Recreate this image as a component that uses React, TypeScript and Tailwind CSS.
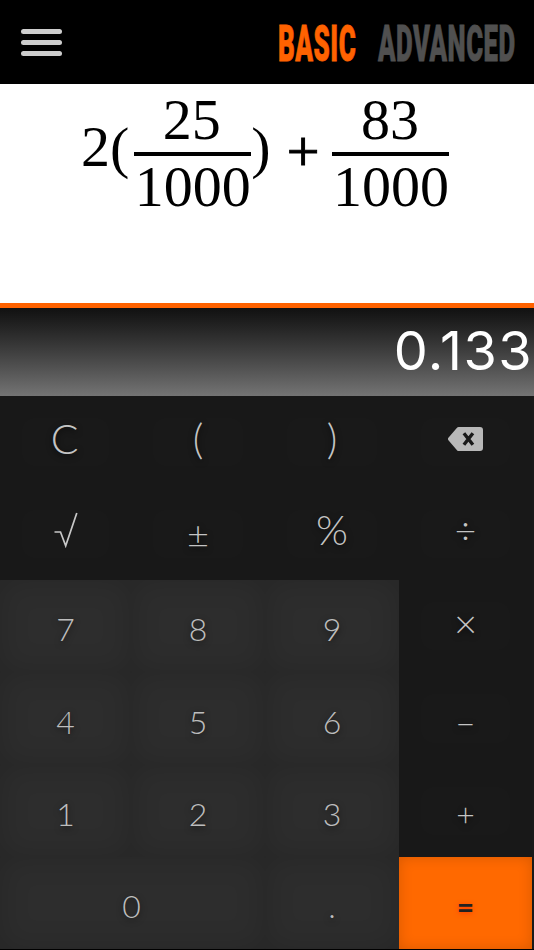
import clsx from "clsx";

type Key = {
  label: string;
  text?: string;
  kind?: "digit" | "equals";
  wide?: boolean;
};

const keys: Key[] = [
  { label: "C", text: "text-[41px] pb-[7px] pr-0.5" },
  { label: "(", text: "text-[41px] pb-[7px]" },
  { label: ")", text: "text-[41px] pb-[7px]" },
  { label: "back" },
  { label: "sqrt" },
  { label: "±", text: "text-[38px] pb-0.5" },
  { label: "%", text: "text-[41px] pb-[9px]" },
  { label: "÷", text: "text-[37px] pb-[9px]" },
  { label: "7", kind: "digit" },
  { label: "8", kind: "digit" },
  { label: "9", kind: "digit" },
  { label: "×", text: "text-[40px] pb-[6px]" },
  { label: "4", kind: "digit" },
  { label: "5", kind: "digit" },
  { label: "6", kind: "digit" },
  { label: "–", text: "text-[36px] pt-[4px]" },
  { label: "1", kind: "digit" },
  { label: "2", kind: "digit" },
  { label: "3", kind: "digit" },
  { label: "+", text: "text-[32px] pt-[7px]" },
  { label: "0", kind: "digit", wide: true },
  { label: ".", kind: "digit" },
  { label: "=", kind: "equals" },
];

function BackspaceIcon() {
  return (
    <svg width="35" height="24" viewBox="0 0 35 24" className="mb-[6px]">
      <path
        d="M10.6 0H32a3 3 0 0 1 3 3v18a3 3 0 0 1-3 3H10.6a2 2 0 0 1-1.4-.6L.4 13.2a1.8 1.8 0 0 1 0-2.4L9.2.6A2 2 0 0 1 10.6 0Z"
        fill="#b8b8b8"
      />
      <path d="M15.9 6.2 24.9 17.8M24.9 6.2 15.9 17.8" stroke="#191919" strokeWidth="3.4" />
    </svg>
  );
}

function RootIcon() {
  return (
    <svg width="24" height="36" viewBox="0 0 24 36" fill="none" stroke="#c8c8c8" className="mb-[8px]">
      <path d="M0.5 20H6.5L11.7 33.8L22.8 1" strokeWidth="1.7" />
    </svg>
  );
}

function KeyButton({ label, text, kind, wide }: Key) {
  return (
    <button
      className={clsx(
        "flex items-center justify-center leading-none",
        wide && "col-span-2 pr-0.5",
        !kind &&
          "bg-[#191919] font-light text-[#c4c4c4] shadow-[inset_0_0_30px_rgba(0,0,0,0.06)] [text-shadow:0_2px_6px_rgba(0,0,0,0.7)]",
        kind === "digit" &&
          "bg-[#2d2d2d] pt-[6px] text-[32px] font-light text-[#bdbdbd] shadow-[inset_0_0_30px_rgba(0,0,0,0.16)] [text-shadow:0_2px_6px_rgba(0,0,0,0.6)]",
        kind === "equals" &&
          "bg-[#ff6900] pt-1.5 text-[30px] font-bold text-[#222] shadow-[inset_0_0_14px_rgba(0,0,0,0.16)] [text-shadow:0_1px_5px_rgba(255,50,0,0.9)]",
        text
      )}
    >
      {label === "back" ? <BackspaceIcon /> : label === "sqrt" ? <RootIcon /> : label}
    </button>
  );
}

function Fraction({ top, bottom }: { top: string; bottom: string }) {
  return (
    <div className="flex w-[117px] flex-col text-center">
      <span className="h-[62px] pr-0.5">{top}</span>
      <span className="mt-px h-1 bg-black" />
      <span className="h-[62px]">{bottom}</span>
    </div>
  );
}

export default function App() {
  return (
    <div className="flex h-[950px] w-[534px] flex-col overflow-hidden bg-black font-['Lato',sans-serif]">
      <header className="flex h-[84px] items-center justify-between pr-[19px] pl-[21px]">
        <div className="flex flex-col gap-[6px] pt-px">
          <span className="h-[5px] w-[41px] rounded-full bg-[#cdcdcd]" />
          <span className="h-[5px] w-[41px] rounded-full bg-[#cdcdcd]" />
          <span className="h-[5px] w-[41px] rounded-full bg-[#cdcdcd]" />
        </div>
        <nav className="flex pt-[3px] font-['Roboto',sans-serif] text-[50px] leading-none font-black tracking-[1px]">
          <span className="w-[100px] text-[#ff6200]">
            <span className="inline-block origin-left scale-x-[0.52] [-webkit-text-stroke:0.8px_#ff6200]">BASIC</span>
          </span>
          <span className="w-[137px] text-[#505050]">
            <span className="inline-block origin-left scale-x-[0.515] [-webkit-text-stroke:0.8px_#505050]">ADVANCED</span>
          </span>
        </nav>
      </header>

      <section className="flex h-[219px] bg-white pt-[5px] pl-[81px] font-['Liberation_Serif',serif] text-[58px] leading-[62px] text-black">
        <span className="pt-[27px]">2</span>
        <span className="mr-[5px] pt-[28px]">(</span>
        <Fraction top="25" bottom="1000" />
        <span className="pt-[28px]">)</span>
        <span className="mr-[13px] ml-[16px] pt-[32px] [-webkit-text-stroke:1px_black]">+</span>
        <Fraction top="83" bottom="1000" />
      </section>

      <section className="flex h-[93px] items-center justify-end border-t-[5px] border-[#ff6200] bg-linear-to-b from-[#111] to-[#747474] pr-px pb-[3px] font-['Inter',sans-serif] text-[54px] leading-none font-[370] tracking-[1.4px] text-white">
        0.133
      </section>

      <main className="grid h-[553px] grid-cols-[131px_134px_134px_133px] grid-rows-6 bg-[#191919]">
        {keys.map((key) => (
          <KeyButton key={key.label} {...key} />
        ))}
      </main>
    </div>
  );
}
